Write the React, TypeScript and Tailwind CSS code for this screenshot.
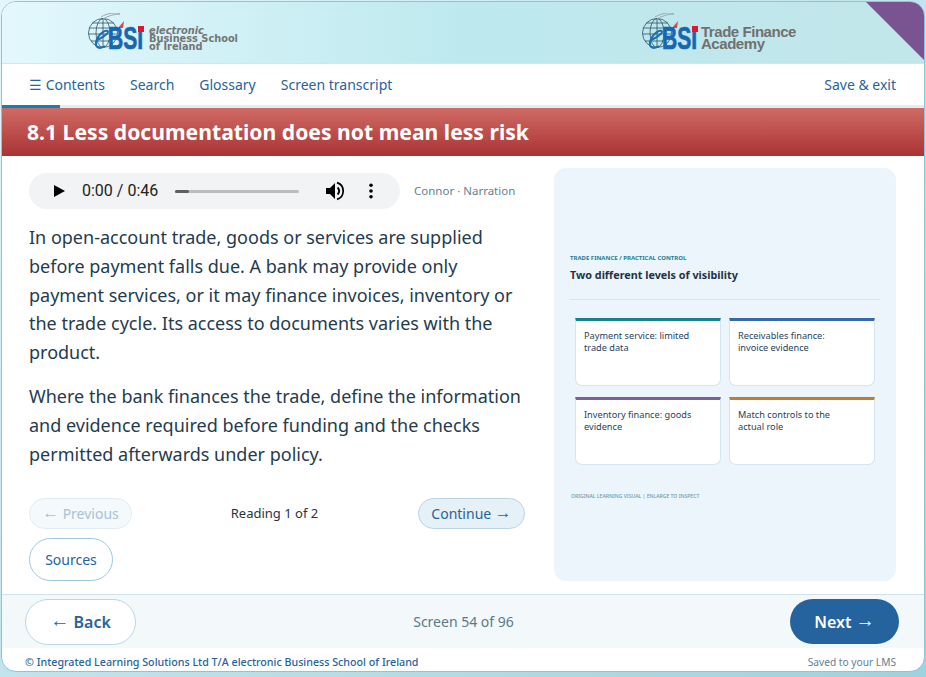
const font = { fontFamily: '"Noto Sans", "Open Sans", sans-serif' };
const arrowFont = { fontFamily: '"Liberation Sans", sans-serif' };

function Arrow({ children }: { children: React.ReactNode }) {
  return <span className="text-[1.2em] leading-none align-[1px]" style={arrowFont}>{children}</span>;
}

function Logo({ children }: { children: React.ReactNode }) {
  return (
    <div className="flex items-start h-[40px]">
      <div className="relative w-[62px] h-[40px] shrink-0">
        <svg width="62" height="40" viewBox="0 0 62 40" className="absolute left-0 top-0" fill="none">
          <g stroke="#2b5468" strokeWidth="0.8">
            <circle cx="18" cy="20" r="14.5" />
            <ellipse cx="18" cy="20" rx="7" ry="14.5" />
            <path d="M18 5.5V34.5M4 15H32M3.5 21H32M6 28H26M7 10H29" />
          </g>
          <path d="M16 4C22 0 32 -1 35 1C29 1 23 3 18 6" stroke="#9aa7b0" strokeWidth="1" />
          <path d="M33 15L39 8L38 15Z" fill="#d84a4a" />
          <path d="M11 28C16 25 24 21 23 18.5C21.5 15.5 13 21 11 29C10 34 14 37 20 33" stroke="#1c6fb5" strokeWidth="2" />
        </svg>
        <span className="absolute left-[23px] top-[9px] text-[31px] leading-[34px] font-bold text-[#1767b0] scale-x-[0.68] origin-left [-webkit-text-stroke:0.7px_#1767b0]" style={{ fontFamily: '"Liberation Sans", sans-serif' }}>
          BSI
        </span>
        <div className="absolute left-[53px] top-[13px] w-[6px] h-[6px] bg-[#e3162d]" />
      </div>
      {children}
    </div>
  );
}

function VisualCard({ color, text }: { color: string; text: string }) {
  return (
    <div className={`h-[68px] bg-white rounded-b-[7px] border border-[#d5e6f0] border-t-[3px] ${color} pl-[8px] pr-[20px] pt-[9px] text-[9.2px] leading-[12px] text-[#26435c]`}>
      {text}
    </div>
  );
}

export default function App() {
  return (
    <div className="w-[926px] h-[677px] overflow-hidden bg-gradient-to-br from-[#e4f6fb] to-[#9dd2de] pt-px pl-px" style={font}>
      <div className="w-[924px] h-[671px] bg-white rounded-[15px] border border-[#8fc3d6] overflow-hidden flex flex-col">
        <header className="relative h-[62px] shrink-0 bg-gradient-to-r from-[#e3f8fd] via-[#bde9ee] to-[#c2e6ea] flex justify-between pl-[83px] pr-[128px] pt-[11px] border-b border-[#cfe7ee]">
          <Logo>
            <div className="ml-[2px] text-[9.8px] leading-[8px] font-bold text-[#757575] pt-[14px]" style={{ fontFamily: '"DejaVu Sans", sans-serif' }}>
              <div className="italic">electronic</div>
              <div>Business School</div>
              <div>of Ireland</div>
            </div>
          </Logo>
          <Logo>
            <div className="text-[15px] leading-[12px] font-bold text-[#707070] pt-[13px] tracking-[-0.45px]" style={{ fontFamily: '"Liberation Sans", sans-serif' }}>
              <div>Trade Finance</div>
              <div>Academy</div>
            </div>
          </Logo>
          <svg width="58" height="58" viewBox="0 0 58 58" className="absolute right-0 top-0">
            <polygon points="0,0 58,0 58,58" fill="#7a5391" />
          </svg>
        </header>

        <nav className="h-[41px] shrink-0 flex items-center justify-between pl-[27px] pr-[28px] text-[14px] text-[#26639c]">
          <div className="flex items-center gap-[25px]">
            <span>☰ Contents</span>
            <span>Search</span>
            <span>Glossary</span>
            <span>Screen transcript</span>
          </div>
          <span>Save &amp; exit</span>
        </nav>
        <div className="h-[3px] shrink-0 bg-[#e4edf3]">
          <div className="h-full w-[58px] bg-[#0f82b5]" />
        </div>

        <div className="h-[48px] shrink-0 bg-gradient-to-b from-[#cf6a64] to-[#aa3235] flex items-center pl-[25px] text-[21.15px] font-bold text-white">
          8.1 Less documentation does not mean less risk
        </div>

        <main className="flex-1 flex pl-[27px] pr-[27px] pt-[12px] border-b border-[#cfe2ed] min-h-0">
          <section className="w-[496px] shrink-0 pt-[5px]">
            <div className="flex items-center">
              <div className="w-[371px] h-[36px] rounded-full bg-[#f1f3f4] flex items-center pl-[24px] text-black" style={{ fontFamily: 'Roboto, sans-serif' }}>
                <svg width="12" height="12" viewBox="0 0 12 12"><polygon points="1,0 12,6 1,12" fill="#000" /></svg>
                <span className="ml-[17px] text-[16px] text-[#222]">0:00 / 0:46</span>
                <div className="ml-[17px] w-[124px] h-[3px] rounded-full bg-[#bdbdbd]">
                  <div className="h-full w-[14px] rounded-full bg-[#5f5f5f]" />
                </div>
                <svg width="20" height="20" viewBox="0 0 20 20" className="ml-[26px]">
                  <polygon points="1,7 5,7 10,2 10,18 5,13 1,13" fill="#000" />
                  <path d="M12.5 6.5a4.5 4.5 0 0 1 0 7" stroke="#000" strokeWidth="2" fill="none" />
                  <path d="M12 1.6a8.8 8.8 0 0 1 0 16.8" stroke="#000" strokeWidth="1.7" fill="none" />
                </svg>
                <svg width="4" height="16" viewBox="0 0 4 16" className="ml-[24px]">
                  <circle cx="2" cy="2.2" r="1.8" fill="#000" />
                  <circle cx="2" cy="8" r="1.8" fill="#000" />
                  <circle cx="2" cy="13.8" r="1.8" fill="#000" />
                </svg>
              </div>
              <span className="ml-[14px] text-[11.5px] text-[#64808f]">Connor · Narration</span>
            </div>

            <div className="mt-[14px] text-[18px] leading-[28.8px] text-[#243b4f]">
              <p>In open-account trade, goods or services are supplied before payment falls due. A bank may provide only payment services, or it may finance invoices, inventory or the trade cycle. Its access to documents varies with the product.</p>
              <p className="mt-[15px]">Where the bank finances the trade, define the information and evidence required before funding and the checks permitted afterwards under policy.</p>
            </div>

            <div className="mt-[30px] flex items-center justify-between">
              <button className="w-[103px] h-[31px] rounded-full border border-[#e0ecf4] bg-[#f4f9fc] text-[14px] text-[#a9c1d6]"><Arrow>←</Arrow> Previous</button>
              <span className="text-[13px] text-[#1f3545] ml-[-1px]">Reading 1 of 2</span>
              <button className="w-[107px] h-[31px] rounded-full border border-[#b8d4e6] bg-[#e6f0f7] text-[14px] text-[#26639c]">Continue <Arrow>→</Arrow></button>
            </div>
            <button className="mt-[9px] block w-[84px] h-[43px] rounded-full border border-[#9fc8de] bg-white text-[14px] text-[#26639c]">Sources</button>
          </section>

          <aside className="ml-[29px] w-[342px] h-[413px] rounded-[12px] bg-[#ebf5fb] px-[16px] pt-[85px]">
            <div className="text-[6px] leading-[10px] font-bold text-[#1c7f95] uppercase">Trade finance / practical control</div>
            <div className="mt-[4px] text-[10.8px] leading-[15px] font-bold text-[#1f3345]">Two different levels of visibility</div>
            <div className="mt-[17px] h-px w-[310px] bg-[#d5e6ef]" />
            <div className="mt-[18px] mx-[5px] w-[300px] grid grid-cols-2 gap-[8px] gap-y-[11px]">
              <VisualCard color="border-t-[#17818f]" text="Payment service: limited trade data" />
              <VisualCard color="border-t-[#3668ad]" text="Receivables finance: invoice evidence" />
              <VisualCard color="border-t-[#7c5e9f]" text="Inventory finance: goods evidence" />
              <VisualCard color="border-t-[#c57a33]" text="Match controls to the actual role" />
            </div>
            <div className="mt-[26px] ml-px text-[5.1px] leading-[10px] font-medium text-[#6f98a8] uppercase">Original learning visual | Enlarge to inspect</div>
          </aside>
        </main>

        <div className="h-[53px] shrink-0 bg-[#f3f8fb] flex items-center justify-between pl-[23px] pr-[25px]">
          <button className="w-[111px] h-[46px] rounded-full border border-[#bcd6e6] bg-white text-[16px] font-semibold text-[#2a639b]"><Arrow>←</Arrow> Back</button>
          <span className="text-[14px] text-[#5d7888] ml-[1px]">Screen 54 of 96</span>
          <button className="w-[109px] h-[45px] rounded-full bg-[#25639f] text-[16px] font-semibold text-white">Next <Arrow>→</Arrow></button>
        </div>

        <footer className="h-[23px] shrink-0 flex items-center justify-between pl-[23px] pr-[28px] pt-[6px]">
          <span className="text-[10.7px] text-[#26639c] font-medium">© Integrated Learning Solutions Ltd T/A electronic Business School of Ireland</span>
          <span className="text-[10.2px] text-[#64808f]">Saved to your LMS</span>
        </footer>
      </div>
    </div>
  );
}
